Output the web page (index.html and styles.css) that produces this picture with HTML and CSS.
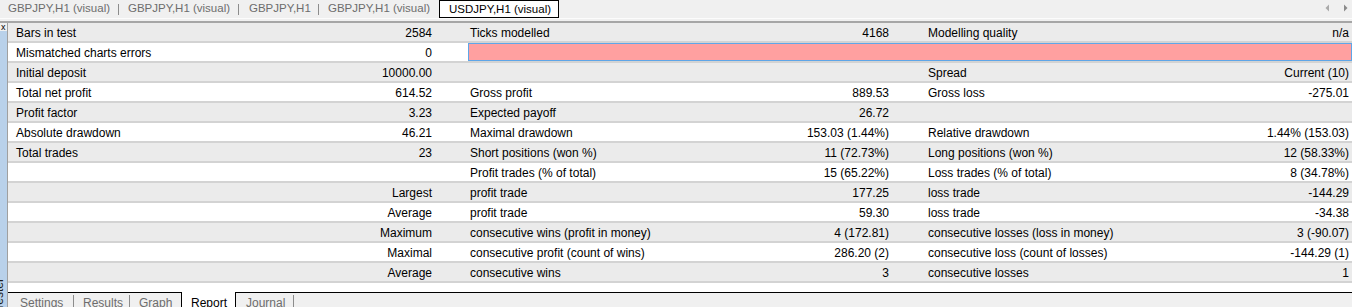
FILE: index.html
```html
<!DOCTYPE html>
<html>
<head>
<meta charset="utf-8">
<link rel="stylesheet" href="styles.css">
</head>
<body>
<div class="app">
  <div class="toptabs">
    <div class="tt t1">GBPJPY,H1 (visual)</div>
    <div class="tsep"></div>
    <div class="tt t2">GBPJPY,H1 (visual)</div>
    <div class="tsep"></div>
    <div class="tt t3">GBPJPY,H1</div>
    <div class="tsep"></div>
    <div class="tt t4">GBPJPY,H1 (visual)</div>
    <div class="tt active">USDJPY,H1 (visual)</div>
    <div class="tfill"></div>
    <div class="arrows">
      <svg width="5" height="8" viewBox="0 0 5 8"><path d="M4 0.5 L0.5 4 L4 7.5 Z" fill="#a9a9a9"/></svg>
      <svg width="5" height="8" viewBox="0 0 5 8"><path d="M1 0.5 L4.5 4 L1 7.5 Z" fill="#8a8a8a"/></svg>
    </div>
  </div>
  <div class="tabline"></div>
  <div class="main">
    <div class="side">
      <div class="close">x</div>
      <div class="sidebar"><span class="vtext">Tester</span></div>
    </div>
    <div class="panel">
      <div class="report">
        <div class="row alt"><div class="c1">Bars in test</div><div class="c2">2584</div><div class="c3">Ticks modelled</div><div class="c4">4168</div><div class="c5">Modelling quality</div><div class="c6">n/a</div></div>
        <div class="row"><div class="c1">Mismatched charts errors</div><div class="c2">0</div><div class="bar"></div></div>
        <div class="row alt"><div class="c1">Initial deposit</div><div class="c2">10000.00</div><div class="c3"></div><div class="c4"></div><div class="c5">Spread</div><div class="c6">Current (10)</div></div>
        <div class="row"><div class="c1">Total net profit</div><div class="c2">614.52</div><div class="c3">Gross profit</div><div class="c4">889.53</div><div class="c5">Gross loss</div><div class="c6">-275.01</div></div>
        <div class="row alt"><div class="c1">Profit factor</div><div class="c2">3.23</div><div class="c3">Expected payoff</div><div class="c4">26.72</div><div class="c5"></div><div class="c6"></div></div>
        <div class="row"><div class="c1">Absolute drawdown</div><div class="c2">46.21</div><div class="c3">Maximal drawdown</div><div class="c4">153.03 (1.44%)</div><div class="c5">Relative drawdown</div><div class="c6">1.44% (153.03)</div></div>
        <div class="row alt"><div class="c1">Total trades</div><div class="c2">23</div><div class="c3">Short positions (won %)</div><div class="c4">11 (72.73%)</div><div class="c5">Long positions (won %)</div><div class="c6">12 (58.33%)</div></div>
        <div class="row"><div class="c1"></div><div class="c2"></div><div class="c3">Profit trades (% of total)</div><div class="c4">15 (65.22%)</div><div class="c5">Loss trades (% of total)</div><div class="c6">8 (34.78%)</div></div>
        <div class="row alt"><div class="c1"></div><div class="c2">Largest</div><div class="c3">profit trade</div><div class="c4">177.25</div><div class="c5">loss trade</div><div class="c6">-144.29</div></div>
        <div class="row"><div class="c1"></div><div class="c2">Average</div><div class="c3">profit trade</div><div class="c4">59.30</div><div class="c5">loss trade</div><div class="c6">-34.38</div></div>
        <div class="row alt"><div class="c1"></div><div class="c2">Maximum</div><div class="c3">consecutive wins (profit in money)</div><div class="c4">4 (172.81)</div><div class="c5">consecutive losses (loss in money)</div><div class="c6">3 (-90.07)</div></div>
        <div class="row"><div class="c1"></div><div class="c2">Maximal</div><div class="c3">consecutive profit (count of wins)</div><div class="c4">286.20 (2)</div><div class="c5">consecutive loss (count of losses)</div><div class="c6">-144.29 (1)</div></div>
        <div class="row alt"><div class="c1"></div><div class="c2">Average</div><div class="c3">consecutive wins</div><div class="c4">3</div><div class="c5">consecutive losses</div><div class="c6">1</div></div>
      </div>
      <div class="spacer"></div>
      <div class="btabs">
        <div class="bt b1">Settings</div>
        <div class="bsep"></div>
        <div class="bt b2">Results</div>
        <div class="bsep"></div>
        <div class="bt b3">Graph</div>
        <div class="bact">Report</div>
        <div class="bt b5">Journal</div>
        <div class="bsep"></div>
        <div class="bfill"></div>
      </div>
    </div>
  </div>
</div>
</body>
</html>
```
FILE: styles.css
```css
html, body {
  margin: 0;
  padding: 0;
}
body {
  width: 1352px;
  height: 307px;
  overflow: hidden;
  background: #f0f0f0;
  font-family: "Liberation Sans", Arial, sans-serif;
  font-size: 12px;
  color: #000;
}
.app {
  display: flex;
  flex-direction: column;
  height: 307px;
}

/* top tabs */
.toptabs {
  height: 18px;
  display: flex;
  align-items: stretch;
  flex: none;
}
.tt {
  color: #6d6d6d;
  font-size: 11.5px;
  line-height: 17px;
  white-space: nowrap;
  box-sizing: border-box;
}
.t1 { width: 118px; padding-left: 8px; }
.t2 { width: 119px; padding-left: 9px; }
.t3 { width: 79px; padding-left: 10px; }
.t4 { width: 120px; padding-left: 9px; }
.tsep {
  width: 1px;
  height: 11px;
  margin-top: 4px;
  background: #8c8c8c;
}
.tt.active {
  width: 120px;
  height: 18px;
  padding-left: 9px;
  color: #000;
  background: #fff;
  border: 1px solid #000;
  line-height: 16px;
}
.tfill { flex: 1; }
.arrows {
  display: flex;
  gap: 13px;
  padding-top: 4px;
  padding-right: 4px;
}
.arrows svg { display: block; }

.tabline {
  height: 5px;
  flex: none;
  background: #f0f0f0;
  border-top: 1px solid #fcfcfc;
  border-bottom: 2px solid #a6a6a6;
  box-sizing: border-box;
}

/* main */
.main {
  flex: 1;
  display: flex;
  min-height: 0;
}
.side {
  width: 7px;
  flex: none;
  display: flex;
  flex-direction: column;
  border-right: 1px solid #a0a0a0;
  overflow: hidden;
}
.close {
  height: 8px;
  font-size: 9px;
  line-height: 8px;
  padding-left: 1px;
  color: #000;
  background: #f0f0f0;
}
.sidebar {
  flex: 1;
  background: #b9d1ea;
  display: flex;
  flex-direction: column;
  justify-content: flex-end;
  overflow: hidden;
}
.vtext {
  writing-mode: vertical-rl;
  transform: rotate(180deg);
  font-size: 12px;
  line-height: 7px;
  color: #1a1a1a;
  margin-left: -4px;
  margin-bottom: -4px;
}

.panel {
  flex: 1;
  background: #fff;
  display: flex;
  flex-direction: column;
}
.report {
  display: flex;
  flex-direction: column;
}
.row {
  display: grid;
  grid-template-columns: 232px 226px 234px 224px 216px 212px;
  height: 20px;
  box-sizing: border-box;
  border-bottom: 2px solid #d3d3d3;
  background: #fff;
  line-height: 18px;
}
.row.alt { background: #ebebeb; }
.row > div {
  white-space: nowrap;
  overflow: hidden;
  padding-top: 2px;
  line-height: 16px;
}
.c1 { padding-left: 8px; }
.c2 { text-align: right; padding-right: 34px; }
.c3 { padding-left: 4px; }
.c4 { text-align: right; padding-right: 35px; }
.c5 { padding-left: 4px; }
.c6 { text-align: right; padding-right: 3px; }
.row > .bar {
  grid-column: 3 / 7;
  margin-left: 2px;
  padding: 0;
  background: #ffa0a0;
  border: 1px solid #5ea6e8;
  box-sizing: border-box;
}

.spacer { flex: 1; }

/* bottom tabs */
.btabs {
  height: 15px;
  flex: none;
  display: flex;
  background: #f0f0f0;
}
.bt {
  color: #6d6d6d;
  border-top: 1px solid #000;
  box-sizing: border-box;
  padding-top: 2px;
  line-height: 17px;
  white-space: nowrap;
}
.b1 { width: 65px; padding-left: 12px; }
.b2 { width: 55px; padding-left: 9px; }
.b3 { width: 51px; padding-left: 9px; }
.b5 { width: 57px; padding-left: 10px; }
.bsep {
  width: 1px;
  background: #8c8c8c;
  border-top: 3px solid #f0f0f0;
  box-sizing: border-box;
  position: relative;
}
.bsep::before {
  content: "";
  position: absolute;
  top: -3px;
  left: 0;
  width: 1px;
  height: 1px;
  background: #000;
}
.bact {
  width: 55px;
  padding-left: 9px;
  padding-top: 2px;
  box-sizing: border-box;
  background: #fff;
  border-left: 1px solid #000;
  border-right: 1px solid #000;
  line-height: 18px;
  color: #000;
}
.bfill {
  flex: 1;
  border-top: 1px solid #000;
}
```
